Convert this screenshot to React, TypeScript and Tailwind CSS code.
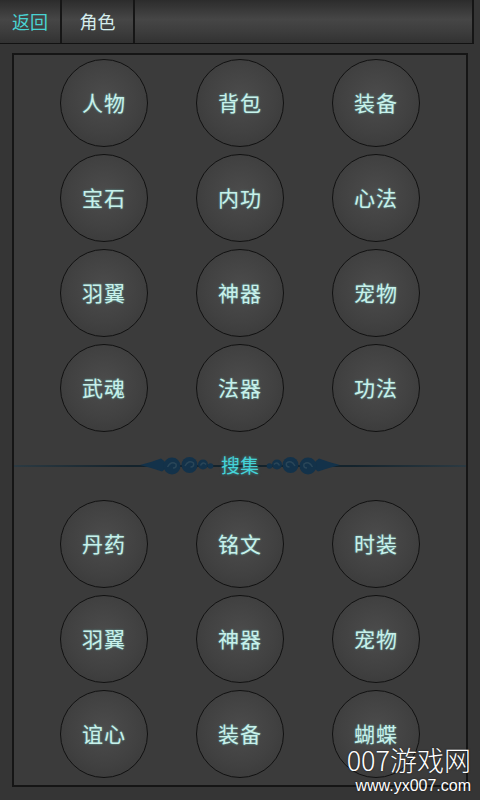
import React from 'react';

const topItems = ['人物', '背包', '装备', '宝石', '内功', '心法', '羽翼', '神器', '宠物', '武魂', '法器', '功法'];
const collectItems = ['丹药', '铭文', '时装', '羽翼', '神器', '宠物', '谊心', '装备', '蝴蝶'];

const font = { fontFamily: '"Noto Sans CJK SC", "Noto Sans", sans-serif' };

const RoundButton: React.FC<{ label: string }> = ({ label }) => (
  <div className="flex justify-center">
    <div className="w-[88px] h-[88px] rounded-full border-[1.5px] border-[#111111] bg-[radial-gradient(circle_at_50%_45%,#4c4c4c_0%,#414141_55%,#363636_100%)] flex items-center justify-center">
      <span className="text-[21px] text-[#c8f0ea] tracking-[1px] [text-shadow:0_0_2px_rgba(120,230,220,0.7)]">
        {label}
      </span>
    </div>
  </div>
);

// decorative scroll ornament beside the section title
const Swirl: React.FC<{ flip?: boolean }> = ({ flip }) => (
  <svg width="74" height="22" viewBox="0 0 74 22" className={flip ? '-scale-x-100' : ''}>
    <g fill="#13324a">
      <path d="M0 11 Q12 8 21 4.5 Q31 11 22 17.5 Q12 14 0 11Z" />
      <circle cx="32" cy="12" r="8.5" />
      <circle cx="49.5" cy="11" r="8" />
      <circle cx="63" cy="10.5" r="5" />
      <circle cx="70.5" cy="12" r="2.8" />
    </g>
    <g fill="none" stroke="#2a4658" strokeWidth="1.5">
      <path d="M27.5 13 Q31 6.5 36 10 Q37 14 33 14" />
      <path d="M45 12 Q48.5 5.5 53.5 9 Q54.5 13 50.5 13" />
      <path d="M60.5 11.5 Q63 7 66 10.5" />
    </g>
  </svg>
);

export default function App() {
  return (
    <div className="relative w-[480px] h-[800px] bg-[#353535] overflow-hidden" style={font}>
      {/* top bar */}
      <div className="h-[44px] flex bg-[linear-gradient(#2c2c2c,#464646_45%,#3e3e3e_70%,#323232)] border-b border-[#121212] mr-[6px] border-r-2 border-r-[#151515]">
        <div className="w-[62px] flex items-center justify-center border-r-2 border-[#161616] text-[18px] text-[#49d3d3]">
          返回
        </div>
        <div className="w-[73px] flex items-center justify-center border-r-2 border-[#161616] text-[18px] text-[#d4ecec]">
          角色
        </div>
        <div className="flex-1" />
      </div>

      {/* panel */}
      <div className="mx-[12px] mt-[9px] h-[734px] border-2 border-[#151515] bg-[#3b3b3b] flex flex-col">
        <div className="grid grid-cols-3 px-[22px] pt-[4px] gap-y-[7px]">
          {topItems.map((t, i) => (
            <RoundButton key={i} label={t} />
          ))}
        </div>

        <div className="relative mt-[20px] h-[26px] flex items-center justify-center">
          <div className="absolute left-0 right-0 top-1/2 h-[2px] bg-[linear-gradient(90deg,#2c3a42,#14232c_25%,#14232c_75%,#2c3a42)]" />
          <div className="relative flex items-center gap-[4px]">
            <Swirl />
            <span className="text-[19px] text-[#45d3d8] px-[3px] [text-shadow:0_0_3px_rgba(60,200,210,0.6)]">
              搜集
            </span>
            <Swirl flip />
          </div>
        </div>

        <div className="grid grid-cols-3 px-[22px] mt-[22px] gap-y-[7px]">
          {collectItems.map((t, i) => (
            <RoundButton key={i} label={t} />
          ))}
        </div>
      </div>

      {/* watermark */}
      <div className="absolute right-[9px] bottom-[6px] flex flex-col items-end text-white leading-none [text-shadow:0_0_2px_rgba(0,0,0,0.6)]">
        <span className="text-[27px] font-light">007游戏网</span>
        <span className="text-[16px] mt-[5px]" style={{ fontFamily: '"Liberation Sans", sans-serif' }}>
          www.yx007.com
        </span>
      </div>
    </div>
  );
}
